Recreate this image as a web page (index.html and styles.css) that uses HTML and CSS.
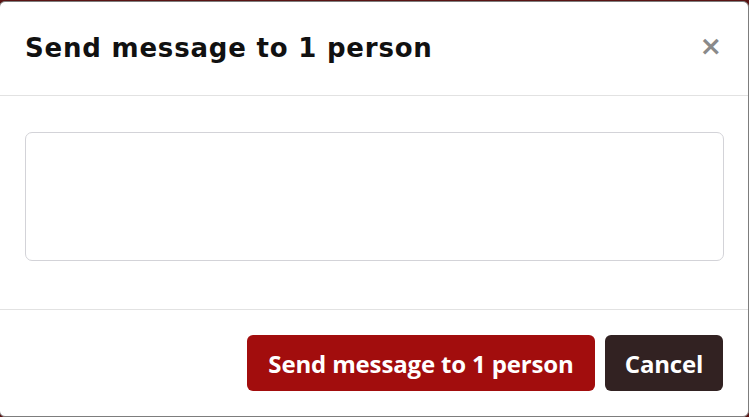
FILE: index.html
```html
<!DOCTYPE html>
<html lang="en">
<head>
    <meta charset="UTF-8">
    <meta name="viewport" content="width=device-width, initial-scale=1.0">
    <title>Send message</title>
    <link rel="stylesheet" href="styles.css">
</head>
<body>
    <div class="modal">
        <div class="modal-header">
            <h2>Send message to 1 person</h2>
            <button class="close" type="button" aria-label="Close">&times;</button>
        </div>
        <div class="modal-body">
            <textarea class="message"></textarea>
        </div>
        <div class="modal-footer">
            <button class="btn btn-primary" type="button">Send message to 1 person</button>
            <button class="btn btn-dark" type="button">Cancel</button>
        </div>
    </div>
</body>
</html>
```

FILE: styles.css
```css
/* Base styles */
* {
    box-sizing: border-box;
    margin: 0;
    padding: 0;
}

body {
    background: #5a1414;
    height: 100vh;
    overflow: hidden;
    font-family: 'Open Sans', sans-serif;
}

.modal {
    margin: 1px 0 0 -1px;
    width: 750px;
    height: 416px;
    background: #fff;
    border: 1px solid #7d7d7d;
    border-radius: 6px;
    display: flex;
    flex-direction: column;
}

.modal-header {
    height: 94px;
    padding: 0 26px 0 25px;
    display: flex;
    align-items: center;
    justify-content: space-between;
    border-bottom: 1px solid #e2e2e2;
}

.modal-header h2 {
    font-family: 'DejaVu Sans', sans-serif;
    font-size: 26px;
    font-weight: 700;
    letter-spacing: 0.8px;
    color: #111;
    margin-top: -1px;
}

.close {
    background: none;
    border: none;
    font-family: 'DejaVu Sans', sans-serif;
    font-size: 27px;
    font-weight: 700;
    color: #8a8a8a;
    line-height: 1;
    cursor: pointer;
    margin-top: -6px;
}

.modal-body {
    height: 214px;
    padding: 36px 25px 0 25px;
    border-bottom: 1px solid #e2e2e2;
}

.message {
    display: block;
    width: 699px;
    height: 129px;
    border: 1px solid #d3d3d8;
    border-radius: 7px;
    resize: none;
    outline: none;
}

.modal-footer {
    flex: 1;
    display: flex;
    justify-content: flex-end;
    align-items: flex-start;
    gap: 10px;
    padding: 25px 25px 0 0;
}

.btn {
    height: 56px;
    padding: 0 10px;
    border: none;
    border-radius: 6px;
    color: #fff;
    font-family: 'Open Sans', sans-serif;
    font-size: 24px;
    font-weight: 700;
    letter-spacing: -0.15px;
    cursor: pointer;
}

.btn-primary {
    background: #a20d0d;
    width: 348px;
}

.btn-dark {
    background: #322222;
    width: 118px;
}
```
